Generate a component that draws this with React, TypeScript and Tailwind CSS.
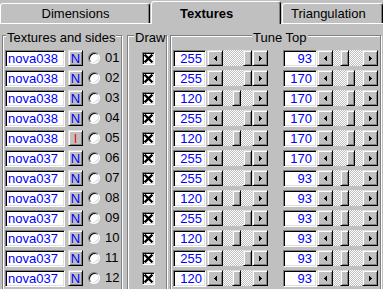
import React from 'react';

type Row = { tex: string; btn: string; id: string; a: number; b: number };

const rows: Row[] = [
    { tex: 'nova038', btn: 'N', id: '01', a: 255, b: 93 },
    { tex: 'nova038', btn: 'N', id: '02', a: 255, b: 170 },
    { tex: 'nova038', btn: 'N', id: '03', a: 120, b: 170 },
    { tex: 'nova038', btn: 'N', id: '04', a: 255, b: 170 },
    { tex: 'nova038', btn: 'I', id: '05', a: 120, b: 170 },
    { tex: 'nova037', btn: 'N', id: '06', a: 255, b: 170 },
    { tex: 'nova037', btn: 'N', id: '07', a: 255, b: 93 },
    { tex: 'nova037', btn: 'N', id: '08', a: 120, b: 93 },
    { tex: 'nova037', btn: 'N', id: '09', a: 255, b: 93 },
    { tex: 'nova037', btn: 'N', id: '10', a: 120, b: 93 },
    { tex: 'nova037', btn: 'N', id: '11', a: 255, b: 93 },
    { tex: 'nova037', btn: 'N', id: '12', a: 120, b: 93 }
];

const sunken =
    'border border-t-[#808080] border-l-[#808080] border-b-white border-r-white shadow-[inset_1px_1px_0_#000,inset_-1px_-1px_0_#dfdfdf]';
const raised =
    'border border-t-[#dfdfdf] border-l-[#dfdfdf] border-b-black border-r-black shadow-[inset_1px_1px_0_#fff,inset_-1px_-1px_0_#808080]';

function Arrow({ dir }: { dir: 'left' | 'right' }) {
    const d = dir === 'left' ? 'M2 0h1v5H2zM1 1h1v3H1zM0 2h1v1H0z' : 'M0 0h1v5H0zM1 1h1v3H1zM2 2h1v1H2z';
    return (
        <svg width="3" height="5" viewBox="0 0 3 5" shapeRendering="crispEdges">
            <path d={d} fill="#000" />
        </svg>
    );
}

function ScrollBar({ value }: { value: number }) {
    const off = Math.round((value / 255) * 20);
    return (
        <div className="flex h-[16px] w-[61px]">
            <div className={`${raised} flex h-[16px] w-[16px] items-center justify-center bg-[#c0c0c0]`}>
                <Arrow dir="left" />
            </div>
            <div className="flex flex-1 bg-[image:repeating-conic-gradient(#fff_0_25%,#c0c0c0_0_50%)] bg-[length:2px_2px]">
                <div style={{ width: off }} />
                <div className={`${raised} h-[16px] w-[9px] bg-[#c0c0c0]`} />
            </div>
            <div className={`${raised} flex h-[16px] w-[16px] items-center justify-center bg-[#c0c0c0]`}>
                <Arrow dir="right" />
            </div>
        </div>
    );
}

function CheckX() {
    return (
        <svg width="9" height="9" viewBox="0 0 9 9">
            <path d="M1.5 1.5L7.5 7.5M7.5 1.5L1.5 7.5" stroke="#000" strokeWidth="2.4" strokeLinecap="square" />
        </svg>
    );
}

function Frame({
    label,
    labelPos,
    className,
    children
}: {
    label: string;
    labelPos: string;
    className: string;
    children: React.ReactNode;
}) {
    return (
        <div className={`relative h-[260px] border border-[#808080] shadow-[inset_1px_1px_0_#fff,1px_1px_0_#fff] ${className}`}>
            <span className={`absolute -top-[5px] bg-[#c0c0c0] px-[1px] text-[13px] leading-[14px] text-black ${labelPos}`}>
                {label}
            </span>
            {children}
        </div>
    );
}

export default function App() {
    return (
        <div className="h-[289px] w-[383px] overflow-hidden bg-[#c0c0c0] text-[13px] leading-[15px] [font-family:'Liberation_Sans_Narrow','Liberation_Sans',Arial,sans-serif]">
            {/* tab strip */}
            <div className="flex h-[24px] items-end border-b border-b-white">
                <div className="flex h-[20px] w-[150px] items-center justify-center rounded-t-[3px] border-t border-l border-r border-t-white border-l-white border-r-black pl-[1px] shadow-[inset_-1px_0_0_#808080]">
                    Dimensions
                </div>
                <div className="relative z-10 -mb-[1px] ml-[1px] flex h-[23px] w-[130px] items-center rounded-t-[3px] border-t border-l border-r border-t-white border-l-white border-r-black bg-[#c0c0c0] pl-[28px] font-bold shadow-[inset_-1px_0_0_#808080]">
                    Textures
                </div>
                <div className="ml-[1px] flex h-[20px] flex-1 items-center rounded-t-[3px] border-t border-l border-r border-t-white border-l-white border-r-black pl-[8px] shadow-[inset_-1px_0_0_#808080]">
                    Triangulation
                </div>
            </div>

            {/* page */}
            <div className="flex pt-[11px] pl-[2px]">
                <Frame label="Textures and sides" labelPos="left-[3px]" className="w-[120px]">
                    <div className="flex flex-col gap-[3px] pt-[14px] pl-[2px]">
                        {rows.map((r) => (
                            <div key={r.id} className="flex h-[17px] items-start">
                                <div className={`${sunken} h-[17px] w-[60px] bg-white pl-[2px] text-[#0000ff] leading-[15px]`}>
                                    {r.tex}
                                </div>
                                <div
                                    className={`${raised} ml-[3px] flex h-[16px] w-[15px] items-center justify-center bg-[#c0c0c0] leading-[13px] ${
                                        r.btn === 'I' ? 'text-[#ff0000]' : 'text-[#0000ff]'
                                    }`}
                                >
                                    {r.btn}
                                </div>
                                <div className="ml-[5px] mt-[2px] h-[12px] w-[12px] rounded-full border border-t-[#808080] border-l-[#808080] border-b-white border-r-white bg-white shadow-[inset_1px_1px_0_#000,inset_-1px_-1px_0_#dfdfdf]" />
                                <div className="ml-[5px] leading-[16px]">{r.id}</div>
                            </div>
                        ))}
                    </div>
                </Frame>

                <Frame label="Draw" labelPos="left-[6px]" className="ml-[5px] w-[40px]">
                    <div className="flex flex-col gap-[3px] pt-[14px] pl-[14px]">
                        {rows.map((r) => (
                            <div key={r.id} className="flex h-[17px] items-center">
                                <div className={`${sunken} flex h-[13px] w-[13px] items-center justify-center bg-white`}>
                                    <CheckX />
                                </div>
                            </div>
                        ))}
                    </div>
                </Frame>

                <Frame label="Tune Top" labelPos="left-[81px]" className="ml-[3px] w-[211px]">
                    <div className="flex flex-col gap-[3px] pt-[14px] pl-[2px]">
                        {rows.map((r) => (
                            <div key={r.id} className="flex h-[17px] items-start">
                                <div className={`${sunken} h-[17px] w-[33px] bg-white pr-[3px] text-right text-[#0000ff] leading-[15px]`}>
                                    {r.a}
                                </div>
                                <div className="ml-[1px]">
                                    <ScrollBar value={r.a} />
                                </div>
                                <div className={`${sunken} ml-[15px] h-[17px] w-[34px] bg-white pr-[4px] text-right text-[#0000ff] leading-[15px]`}>
                                    {r.b}
                                </div>
                                <ScrollBar value={r.b} />
                            </div>
                        ))}
                    </div>
                </Frame>
            </div>
        </div>
    );
}
